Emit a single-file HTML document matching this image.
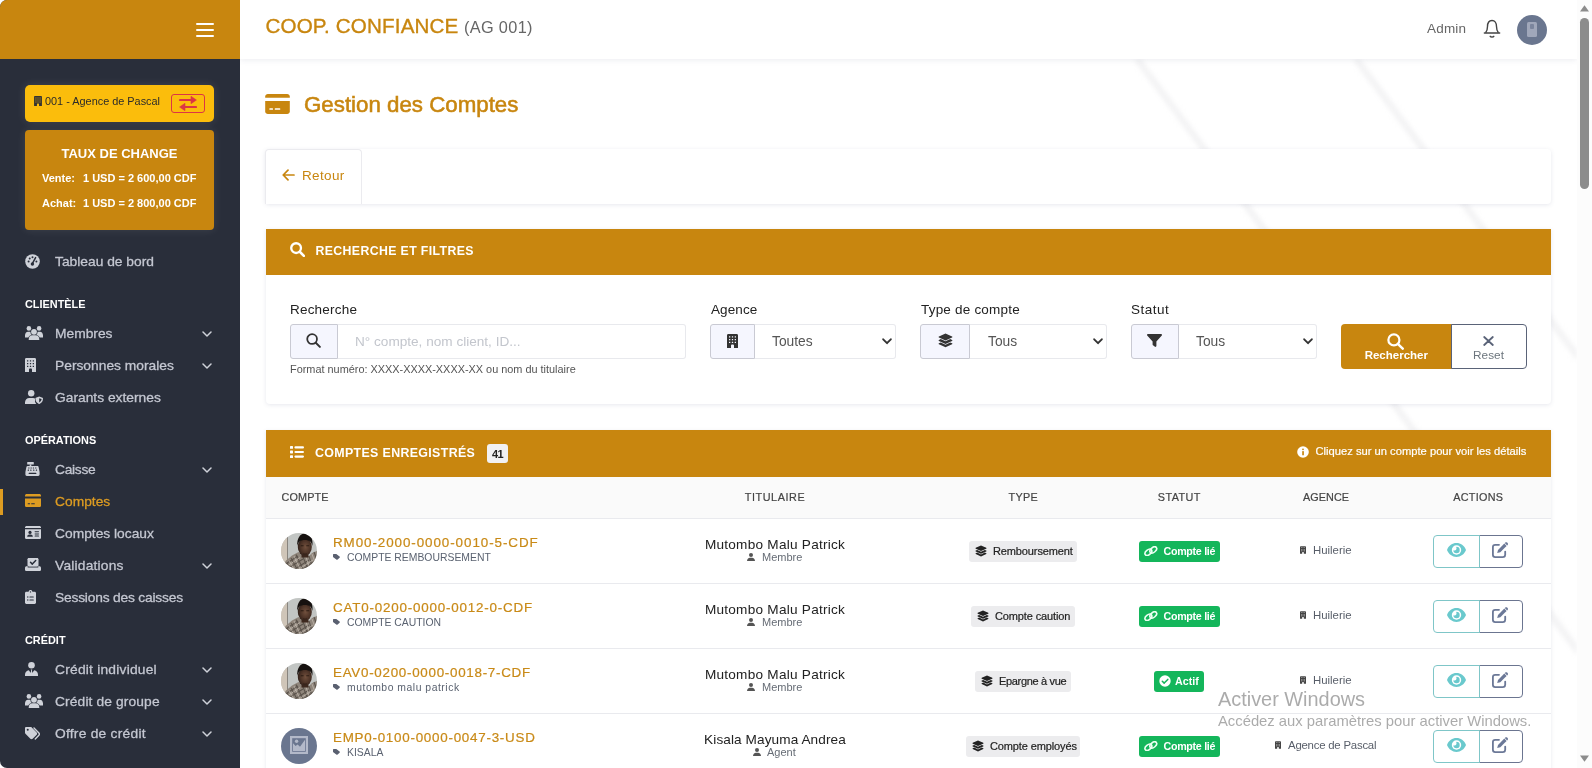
<!DOCTYPE html>
<html lang="fr">
<head>
<meta charset="utf-8">
<title>Gestion des Comptes</title>
<style>
*{box-sizing:border-box;margin:0;padding:0}
html,body{width:1592px;height:768px;overflow:hidden;background:#fff;font-family:"Liberation Sans",sans-serif;color:#333}
.abs,.abs-c{position:absolute;white-space:nowrap}
.abs-c{transform:translateX(-50%)}
svg{display:block}
/* sidebar */
#sidebar{position:absolute;left:0;top:0;width:240px;height:768px;background:#292e3a;overflow:hidden;border-radius:7px 0 0 7px}
#sb-head{position:absolute;left:0;top:0;width:240px;height:59px;background:#c8860f}
.burger{position:absolute;left:196px;top:23px;width:18px;height:14px}
.burger i{position:absolute;left:0;width:18px;height:2px;background:#fff;border-radius:1px}
#agency{position:absolute;left:25px;top:85px;width:189px;height:37px;background:#fbbd0c;border-radius:5px;box-shadow:0 0 10px rgba(255,255,255,.12)}
#taux{position:absolute;left:25px;top:130px;width:189px;height:100px;background:#c8860f;border-radius:4px;box-shadow:0 0 10px rgba(255,255,255,.10);color:#fff}
.mi{position:absolute;margin-top:1.4px;left:55px;font-size:13.8px;-webkit-text-stroke-width:.3px;color:#c4c7d1;line-height:20px;white-space:nowrap;transform:scaleY(.92);transform-origin:0 75%}
.mh{position:absolute;left:25px;font-size:10.9px;font-weight:bold;color:#fff;line-height:16px;letter-spacing:0;white-space:nowrap;margin-top:1px}
.ico{position:absolute}
.chev{position:absolute;left:202px;width:10px;height:6px}
/* topbar */
#topbar{z-index:2;position:absolute;left:240px;top:0;width:1337px;height:59px;background:#fff;box-shadow:0 1px 6px rgba(60,70,110,.10)}
#main{position:absolute;left:240px;top:58px;width:1337px;height:710px;background:#fff;overflow:hidden}
/* scrollbar */
#scroll{position:absolute;left:1577px;top:0;width:15px;height:768px;background:#fcfcfc}
#scroll .thumb{position:absolute;left:3px;top:18px;width:9px;height:171px;background:#8c8c8c;border-radius:4.500px}
.card{position:absolute;background:#fff;box-shadow:0 1px 4px rgba(70,80,120,.13);border-radius:4px}
.chead{position:absolute;background:#c8860f}

.lbl{position:absolute;font-size:13.5px;color:#222;line-height:18px;white-space:nowrap}
.ibox{position:absolute;top:324px;height:35px;background:#f5f6fe;border:1px solid #c9cad3;border-radius:3px 0 0 3px}
.inp{position:absolute;top:324px;height:35px;background:#fff;border:1px solid #e8e9ed;border-left:none;border-radius:0 3px 3px 0}
.sel{position:absolute;font-size:13.8px;color:#555;line-height:18px;top:332.600px;white-space:nowrap}
.th{position:absolute;top:490px;font-size:10.8px;color:#444;line-height:14px;white-space:nowrap;-webkit-text-stroke-width:.2px}
.thc{transform:translateX(-50%)}
#tbc{position:absolute;left:0;top:0;z-index:3;will-change:transform}
#content{position:absolute;left:0;top:0;z-index:1;will-change:transform}
#sidebar{z-index:4;will-change:transform}
#scroll{z-index:5}

.row{position:absolute;left:266px;width:1285px;height:65px;border-top:1px solid #e9eaee;background:#fff}
.acc{position:absolute;left:333px;-webkit-text-stroke-width:.2px;font-size:13.4px;letter-spacing:1.05px;color:#c98a17;line-height:18px;white-space:nowrap}
.sub{position:absolute;left:347px;margin-top:1px;font-size:10.4px;color:#5a6270;line-height:14px;white-space:nowrap}
.nm{position:absolute;left:775px;transform:translateX(-50%);font-size:13.6px;letter-spacing:.25px;color:#222;line-height:18px;white-space:nowrap}
.role{position:absolute;font-size:11px;color:#666c75;line-height:14px;white-space:nowrap}
.tb{position:absolute;margin-top:1px;height:21px;background:#ececee;border-radius:3px}
.tbt{position:absolute;font-size:11px;letter-spacing:-.12px;color:#222;line-height:14px;white-space:nowrap;-webkit-text-stroke-width:.2px}
.sb{position:absolute;height:21px;background:#14b65b;border-radius:3px}
.sbt{position:absolute;font-size:10.7px;font-weight:bold;color:#fff;line-height:14px;white-space:nowrap;letter-spacing:-.3px}
.agt{position:absolute;font-size:11.4px;color:#585e69;line-height:14px;white-space:nowrap}
.bv{z-index:1;position:absolute;left:1433px;width:47px;height:33px;border:1px solid #7fc6c8;border-radius:4px 0 0 4px;background:transparent}
.be{position:absolute;left:1479px;width:44px;height:33px;border:1px solid #6b7590;border-radius:0 4px 4px 0;background:#fff}
.av{position:absolute;left:281px;width:36px;height:36px;border-radius:50%;overflow:hidden}
</style>
</head>
<body>
<div id="sidebar">
  <div id="sb-head"><div class="burger"><i style="top:0"></i><i style="top:6px"></i><i style="top:12px"></i></div></div>
  <div id="agency"><svg class="ico" style="left:9px;top:11px" width="8" height="10" viewBox="0 0 11 14"><path d="M1.300 0h8.400c.7 0 1.300.6 1.300 1.300v12.700H7v-2.500c0-.5-.4-.9-.9-.9H4.900c-.5 0-.9.4-.9.900V14H0V1.300C0 .6.600 0 1.300 0z" fill="#333"/><g fill="#fbbd0c"><rect x="2" y="2.2" width="1.300" height="1.300" rx=".2"/><rect x="4.85" y="2.2" width="1.300" height="1.300" rx=".2"/><rect x="7.7" y="2.2" width="1.300" height="1.300" rx=".2"/><rect x="2" y="5" width="1.300" height="1.300" rx=".2"/><rect x="4.85" y="5" width="1.300" height="1.300" rx=".2"/><rect x="7.7" y="5" width="1.300" height="1.300" rx=".2"/><rect x="2" y="7.8" width="1.300" height="1.300" rx=".2"/><rect x="4.85" y="7.8" width="1.300" height="1.300" rx=".2"/><rect x="7.7" y="7.8" width="1.300" height="1.300" rx=".2"/></g></svg><span class="abs" id="t-ag" style="left:20px;top:8px;font-size:10.9px;line-height:16px;color:#2b2b2b">001 - Agence de Pascal</span><div style="position:absolute;left:146px;top:9px;width:34px;height:19px;border:1px solid #dc3545;border-radius:3px"><svg style="position:absolute;left:7px;top:1px" width="18" height="15" viewBox="0 0 18 15"><path d="M1 4h12M17 11H5" fill="none" stroke="#dc3545" stroke-width="2.200" stroke-linecap="round"/><path d="M12 .3l5.400 3.700L12 7.700zM6 7.300L.6 11 6 14.700z" fill="#dc3545" stroke="#dc3545" stroke-width=".6" stroke-linejoin="round"/></svg></div></div>
  <div id="taux"><span class="abs-c" id="t-taux" style="left:94.5px;top:16px;font-size:13px;font-weight:bold;line-height:16px">TAUX DE CHANGE</span><span class="abs" id="t-v1" style="left:17px;top:41px;font-size:11px;font-weight:bold;line-height:14px">Vente:</span><span class="abs" id="t-v2" style="left:58px;top:41px;font-size:11px;font-weight:bold;line-height:14px">1 USD = 2 600,00 CDF</span><span class="abs" id="t-a1" style="left:17px;top:66px;font-size:11px;font-weight:bold;line-height:14px">Achat:</span><span class="abs" id="t-a2" style="left:58px;top:66px;font-size:11px;font-weight:bold;line-height:14px">1 USD = 2 800,00 CDF</span></div>
  <span class="mi" id="mi0" style="top:251px">Tableau de bord</span>
  <span class="mi" id="mi1" style="top:323px">Membres</span>
  <svg class="chev" style="top:331px" viewBox="0 0 10 6"><path d="M1 1l4 4 4-4" fill="none" stroke="#cfd2d9" stroke-width="1.5" stroke-linecap="round" stroke-linejoin="round"/></svg>
  <span class="mi" id="mi2" style="top:355px">Personnes morales</span>
  <svg class="chev" style="top:363px" viewBox="0 0 10 6"><path d="M1 1l4 4 4-4" fill="none" stroke="#cfd2d9" stroke-width="1.5" stroke-linecap="round" stroke-linejoin="round"/></svg>
  <span class="mi" id="mi3" style="top:387px">Garants externes</span>
  <span class="mi" id="mi4" style="top:459px;letter-spacing:-0.3px">Caisse</span>
  <svg class="chev" style="top:467px" viewBox="0 0 10 6"><path d="M1 1l4 4 4-4" fill="none" stroke="#cfd2d9" stroke-width="1.5" stroke-linecap="round" stroke-linejoin="round"/></svg>
  <span class="mi" id="mi5" style="top:491px;color:#dd9c22">Comptes</span>
  <span class="mi" id="mi6" style="top:523px">Comptes locaux</span>
  <span class="mi" id="mi7" style="top:555px;letter-spacing:0.2px">Validations</span>
  <svg class="chev" style="top:563px" viewBox="0 0 10 6"><path d="M1 1l4 4 4-4" fill="none" stroke="#cfd2d9" stroke-width="1.5" stroke-linecap="round" stroke-linejoin="round"/></svg>
  <span class="mi" id="mi8" style="top:587px;letter-spacing:-0.2px">Sessions des caisses</span>
  <span class="mi" id="mi9" style="top:659px;letter-spacing:0.22px">Crédit individuel</span>
  <svg class="chev" style="top:667px" viewBox="0 0 10 6"><path d="M1 1l4 4 4-4" fill="none" stroke="#cfd2d9" stroke-width="1.5" stroke-linecap="round" stroke-linejoin="round"/></svg>
  <span class="mi" id="mi10" style="top:691px;letter-spacing:0.12px">Crédit de groupe</span>
  <svg class="chev" style="top:699px" viewBox="0 0 10 6"><path d="M1 1l4 4 4-4" fill="none" stroke="#cfd2d9" stroke-width="1.5" stroke-linecap="round" stroke-linejoin="round"/></svg>
  <span class="mi" id="mi11" style="top:723px;letter-spacing:0.24px">Offre de crédit</span>
  <svg class="chev" style="top:731px" viewBox="0 0 10 6"><path d="M1 1l4 4 4-4" fill="none" stroke="#cfd2d9" stroke-width="1.5" stroke-linecap="round" stroke-linejoin="round"/></svg>
  <span class="mh" id="mh0" style="top:295px">CLIENTÈLE</span>
  <span class="mh" id="mh1" style="top:431px">OPÉRATIONS</span>
  <span class="mh" id="mh2" style="top:631px">CRÉDIT</span>
  <div style="position:absolute;left:0;top:489px;width:3px;height:26px;background:#dd9c22"></div>
  <svg class="ico" style="left:25px;top:254px" width="15" height="15" viewBox="0 0 15 15"><circle cx="7.5" cy="7.5" r="7.3" fill="#cfd2d9"/><circle cx="3.6" cy="7.6" r="1" fill="#292e3a"/><circle cx="4.7" cy="4.5" r="1" fill="#292e3a"/><circle cx="7.5" cy="3.3" r="1" fill="#292e3a"/><circle cx="11.4" cy="7.6" r="1" fill="#292e3a"/><path d="M10.6 3.6L7.6 9.2" stroke="#292e3a" stroke-width="1.5" stroke-linecap="round"/><circle cx="7.4" cy="10" r="1.7" fill="#292e3a"/></svg>
  <svg class="ico" style="left:25px;top:326px" width="18" height="14" viewBox="0 0 18 14"><circle cx="9" cy="5.800" r="2.900" fill="#cfd2d9"/><path d="M3.700 14v-.8c0-2.300 1.700-3.900 3.800-3.900h3c2.100 0 3.800 1.600 3.800 3.900v.8z" fill="#cfd2d9"/><circle cx="3.900" cy="2.400" r="2.300" fill="#cfd2d9"/><circle cx="14.100" cy="2.400" r="2.300" fill="#cfd2d9"/><path d="M0 9.400C0 7.300 1.300 5.800 3 5.800h1.700c.3 0 .6 0 .8.100-.1 1.400.5 2.500 1.300 3.200-1.600.3-2.800 1.100-3.400 2.300H0z" fill="#cfd2d9"/><path d="M18 9.400c0-2.100-1.300-3.600-3-3.600h-1.700c-.3 0-.6 0-.8.100.1 1.400-.5 2.500-1.300 3.200 1.600.3 2.800 1.100 3.400 2.300H18z" fill="#cfd2d9"/></svg>
  <svg class="ico" style="left:25px;top:358px" width="11" height="14" viewBox="0 0 11 14"><path d="M1.300 0h8.400c.7 0 1.300.6 1.300 1.300v12.700H7v-2.500c0-.5-.4-.9-.9-.9H4.900c-.5 0-.9.4-.9.900V14H0V1.300C0 .6.600 0 1.300 0z" fill="#cfd2d9"/><g fill="#292e3a"><rect x="2" y="2.2" width="1.300" height="1.300" rx=".2"/><rect x="4.85" y="2.2" width="1.300" height="1.300" rx=".2"/><rect x="7.7" y="2.2" width="1.300" height="1.300" rx=".2"/><rect x="2" y="5" width="1.300" height="1.300" rx=".2"/><rect x="4.85" y="5" width="1.300" height="1.300" rx=".2"/><rect x="7.7" y="5" width="1.300" height="1.300" rx=".2"/><rect x="2" y="7.8" width="1.300" height="1.300" rx=".2"/><rect x="4.85" y="7.8" width="1.300" height="1.300" rx=".2"/><rect x="7.7" y="7.8" width="1.300" height="1.300" rx=".2"/></g></svg>
  <svg class="ico" style="left:25px;top:390px" width="18" height="14" viewBox="0 0 18 14"><circle cx="6.200" cy="3.300" r="3.200" fill="#cfd2d9"/><path d="M0 14v-1.500c0-2.600 1.900-4.600 4.300-4.600h3.800c.7 0 1.300.2 1.900.5v2.400c0 1.300.5 2.400 1.300 3.200z" fill="#cfd2d9"/><path d="M14.200 6.600l3.300 1.200c.3.100.5.400.5.700 0 2.800-1.500 4.600-3.500 5.400-.2.100-.4.100-.6 0-2-.8-3.500-2.600-3.500-5.400 0-.3.200-.6.500-.7z" fill="#cfd2d9"/><path d="M14.200 8.200v4.300c1.400-.7 2.300-1.900 2.400-3.400z" fill="#292e3a"/></svg>
  <svg class="ico" style="left:25px;top:462px" width="15" height="14" viewBox="0 0 15 14"><rect x="2.200" y="0" width="6.600" height="2.600" rx=".6" fill="#cfd2d9"/><rect x="4.700" y="2.400" width="1.600" height="1.800" fill="#cfd2d9"/><path d="M2.600 4h9.800c.6 0 1.100.4 1.200 1l.9 4.400c.1.300.1.500.1.800V12.600c0 .8-.6 1.400-1.400 1.400H1.800C1 14 .4 13.400.4 12.600V10.200c0-.3 0-.5.100-.8L1.400 5c.1-.6.600-1 1.200-1z" fill="#cfd2d9"/><g fill="#292e3a"><rect x="3.200" y="5.500" width="1.300" height="1.100" rx=".3"/><rect x="5.500" y="5.500" width="1.300" height="1.100" rx=".3"/><rect x="7.800" y="5.500" width="1.300" height="1.100" rx=".3"/><rect x="10.100" y="5.500" width="1.300" height="1.100" rx=".3"/><rect x="2.700" y="7.600" width="1.300" height="1.100" rx=".3"/><rect x="5.200" y="7.600" width="1.300" height="1.100" rx=".3"/><rect x="8.100" y="7.600" width="1.300" height="1.100" rx=".3"/><rect x="10.800" y="7.600" width="1.300" height="1.100" rx=".3"/><rect x="3.600" y="10.800" width="7.800" height="1.100" rx=".5"/></g></svg>
  <svg class="ico" style="left:25px;top:494px" width="16" height="13" viewBox="0 0 16 13"><path d="M1.700 0h12.600c.9 0 1.700.7 1.700 1.600V2.400H0V1.600C0 .7.800 0 1.700 0z" fill="#dd9c22"/><path d="M0 4.600h16v6.800c0 .9-.8 1.600-1.700 1.600H1.700C.8 13 0 12.300 0 11.400z" fill="#dd9c22"/><rect x="2.700" y="9.200" width="2.400" height="1.100" rx=".4" fill="#292e3a"/><rect x="6.200" y="9.200" width="3.600" height="1.100" rx=".4" fill="#292e3a"/></svg>
  <svg class="ico" style="left:25px;top:526px" width="16" height="13" viewBox="0 0 16 13"><path d="M1.700 0h12.600c.9 0 1.700.7 1.700 1.600V2H0v-.4C0 .7.800 0 1.700 0z" fill="#cfd2d9"/><path d="M0 3.200h16v8.200c0 .9-.8 1.600-1.700 1.600H1.700C.8 13 0 12.300 0 11.400z" fill="#cfd2d9"/><circle cx="5" cy="6.400" r="1.600" fill="#292e3a"/><path d="M2.200 10.800c0-1.300 1-2.200 2.200-2.200h1.200c1.200 0 2.200.9 2.200 2.200z" fill="#292e3a"/><rect x="9.600" y="5.200" width="4.400" height="1" rx=".4" fill="#292e3a"/><rect x="9.600" y="7.400" width="4.400" height="1" rx=".4" fill="#292e3a"/><rect x="9.600" y="9.600" width="4.400" height="1" rx=".4" fill="#292e3a"/></svg>
  <svg class="ico" style="left:25px;top:558px" width="16" height="13" viewBox="0 0 16 13"><rect x="2.700" y="0" width="10.600" height="9.500" rx="1.300" fill="#cfd2d9"/><path d="M5.500 4.300l1.800 1.800 3.400-3.500" fill="none" stroke="#292e3a" stroke-width="1.500" stroke-linecap="round" stroke-linejoin="round"/><path d="M1.600 8.300h12.800c.9 0 1.600.7 1.600 1.600v1.500c0 .9-.7 1.600-1.600 1.600H1.600C.7 13 0 12.300 0 11.400V9.900c0-.9.700-1.600 1.600-1.600z" fill="#cfd2d9"/><path d="M2.700 8.300h10.600v1.200H2.700z" fill="#292e3a"/><rect x="2.700" y="0" width="10.600" height="8.400" rx="1.300" fill="#cfd2d9"/><path d="M5.500 4.300l1.800 1.800 3.400-3.500" fill="none" stroke="#292e3a" stroke-width="1.500" stroke-linecap="round" stroke-linejoin="round"/></svg>
  <svg class="ico" style="left:25px;top:590px" width="11" height="14" viewBox="0 0 11 14"><path d="M1.400 1.700H3.600C3.800.7 4.600 0 5.500 0s1.700.7 1.900 1.700h2.200c.8 0 1.400.6 1.400 1.400v9.500c0 .8-.6 1.400-1.400 1.400H1.400C.6 14 0 13.400 0 12.600V3.100c0-.8.600-1.400 1.400-1.400z" fill="#cfd2d9"/><circle cx="5.500" cy="1.900" r=".7" fill="#292e3a"/><g fill="#292e3a"><circle cx="2.800" cy="7" r=".7"/><circle cx="2.800" cy="10" r=".7"/><rect x="4.400" y="6.500" width="4.400" height="1" rx=".5"/><rect x="4.400" y="9.500" width="4.400" height="1" rx=".5"/></g></svg>
  <svg class="ico" style="left:25px;top:662px" width="13" height="14" viewBox="0 0 13 14"><circle cx="6.500" cy="3.300" r="3.300" fill="#cfd2d9"/><path d="M0 14v-1.300c0-2.300 1.600-4.200 3.800-4.500L5.800 11l.7-2 .7 2 2-2.800c2.200.3 3.800 2.200 3.800 4.500V14z" fill="#cfd2d9"/><path d="M5.700 7.500h1.600l-.4.900.6 3.400-1 1.400-1-1.400.6-3.400z" fill="#cfd2d9"/></svg>
  <svg class="ico" style="left:25px;top:694px" width="18" height="14" viewBox="0 0 18 14"><circle cx="9" cy="5.800" r="2.900" fill="#cfd2d9"/><path d="M3.700 14v-.8c0-2.300 1.700-3.900 3.800-3.900h3c2.100 0 3.800 1.600 3.800 3.900v.8z" fill="#cfd2d9"/><circle cx="3.900" cy="2.400" r="2.300" fill="#cfd2d9"/><circle cx="14.100" cy="2.400" r="2.300" fill="#cfd2d9"/><path d="M0 9.400C0 7.300 1.300 5.800 3 5.800h1.700c.3 0 .6 0 .8.100-.1 1.400.5 2.500 1.300 3.200-1.600.3-2.800 1.100-3.400 2.300H0z" fill="#cfd2d9"/><path d="M18 9.400c0-2.100-1.300-3.600-3-3.600h-1.700c-.3 0-.6 0-.8.100.1 1.400-.5 2.500-1.300 3.200 1.600.3 2.800 1.100 3.400 2.300H18z" fill="#cfd2d9"/></svg>
  <svg class="ico" style="left:25px;top:726.500px" width="15.500" height="13" viewBox="0 0 17 14"><path d="M0 1.300C0 .6.600 0 1.300 0h4.900c.5 0 .9.200 1.200.5l5.400 5.400c.7.700.7 1.800 0 2.500l-4.400 4.400c-.7.700-1.800.7-2.500 0L.5 7.400C.2 7.100 0 6.700 0 6.200z" fill="#cfd2d9"/><circle cx="3" cy="3" r="1.100" fill="#292e3a"/><path d="M9.300.3c.3-.3.800-.3 1.100 0l5.400 5.500c1 1 1 2.600 0 3.600l-4 4.100c-.3.300-.8.300-1.100 0s-.3-.8 0-1.100l4-4.100c.4-.4.400-1 0-1.400L9.300 1.400c-.3-.3-.3-.8 0-1.100z" fill="#cfd2d9"/></svg>
</div>
<div id="topbar"></div>
<div id="tbc">
<span class="abs" id="t-coop" style="left:265.5px;top:13.400px;font-size:20.6px;line-height:26px;color:#c8860f;-webkit-text-stroke-width:.35px;letter-spacing:.15px">COOP. CONFIANCE</span>
<span class="abs" id="t-ag2" style="left:464px;top:16.300px;font-size:16.3px;line-height:22px;color:#666;letter-spacing:.35px">(AG 001)</span>
<span class="abs" id="t-admin" style="left:1427px;top:20px;font-size:13.5px;line-height:18px;color:#666;letter-spacing:.2px">Admin</span>
<svg class="ico" style="left:1483px;top:19px" width="18" height="20" viewBox="0 0 18 20"><path d="M2.600 13.800C4.100 12 4.500 10.300 4.500 7.600 4.500 4 6.200 1.500 9 1.500s4.500 2.500 4.500 6.100c0 2.700.4 4.400 1.900 6.200" fill="none" stroke="#444" stroke-width="1.400"/><path d="M1.400 14h15.200" stroke="#444" stroke-width="1.500" stroke-linecap="round"/><path d="M7.200 17.300c.5.900 3.100.9 3.600 0" fill="none" stroke="#444" stroke-width="1.400" stroke-linecap="round"/></svg>
<div style="position:absolute;left:1517px;top:15px;width:30px;height:30px;border-radius:50%;background:#6a768f"><div style="position:absolute;left:10px;top:7px;width:10px;height:15px;border-radius:1.500px;background:#a0a7ba"></div><div style="position:absolute;left:12.500px;top:9px;width:4px;height:5px;background:#7b859d;border-radius:1px"></div></div>
</div>
<div id="main"></div>
<div id="content">
<svg class="ico" style="left:240px;top:59px;filter:blur(2px)" width="1337" height="709" viewBox="240 59 1337 709"><g fill="none" stroke="#f4f4f5" stroke-width="7"><path d="M1137 59L1665 768"/><path d="M1356 59L1884 768"/></g></svg>
<svg class="ico" style="left:265px;top:94px" width="25" height="20" viewBox="0 0 16 13"><path d="M1.700 0h12.600c.9 0 1.700.7 1.700 1.600V2.400H0V1.600C0 .7.800 0 1.700 0z" fill="#c8860f"/><path d="M0 4.600h16v6.800c0 .9-.8 1.600-1.700 1.600H1.700C.8 13 0 12.300 0 11.400z" fill="#c8860f"/><rect x="2.700" y="9.200" width="2.400" height="1.100" rx=".4" fill="#fff"/><rect x="6.200" y="9.200" width="3.600" height="1.100" rx=".4" fill="#fff"/></svg>
<span class="abs" id="t-title" style="left:304px;top:90.600px;font-size:22.3px;line-height:28px;color:#c8860f;-webkit-text-stroke-width:.55px">Gestion des Comptes</span>
<div class="card" style="left:265px;top:149px;width:1286px;height:55px"></div>
<div style="position:absolute;left:265px;top:149px;width:97px;height:55px;border:1px solid #ebebef;border-bottom:none;border-radius:4px 4px 0 0;background:#fff"></div>
<svg class="ico" style="left:282px;top:169px" width="13" height="12" viewBox="0 0 13 12"><path d="M12 6H1.500M6 1.200L1.200 6 6 10.800" fill="none" stroke="#c8860f" stroke-width="1.700" stroke-linecap="round" stroke-linejoin="round"/></svg>
<span class="abs" id="t-retour" style="left:302px;top:167px;font-size:13.5px;line-height:18px;color:#c8860f;letter-spacing:.35px">Retour</span>
<div class="card" style="left:266px;top:229px;width:1285px;height:175px;border-radius:0 0 4px 4px"></div>
<div class="chead" style="left:266px;top:229px;width:1285px;height:46px"></div>
<svg class="ico" style="left:289.500px;top:242px" width="15" height="15" viewBox="0 0 16 16"><circle cx="6.500" cy="6.500" r="5.200" fill="none" stroke="#fff" stroke-width="2.5"/><path d="M10.400 10.400l4.400 4.400" stroke="#fff" stroke-width="2.7" stroke-linecap="round"/></svg>
<span class="abs" id="t-rf" style="left:315.500px;top:243px;font-size:12.3px;font-weight:bold;line-height:16px;color:#fff;letter-spacing:.38px">RECHERCHE ET FILTRES</span>
<span class="lbl" id="l-rech" style="left:290px;top:301px;letter-spacing:.2px">Recherche</span>
<div class="ibox" style="left:290px;width:48px"></div><div class="inp" style="left:338px;width:348px"></div>
<svg class="ico" style="left:306px;top:333px" width="15" height="15" viewBox="0 0 16 16"><circle cx="6.500" cy="6.500" r="5.200" fill="none" stroke="#333" stroke-width="1.9"/><path d="M10.400 10.400l4.400 4.400" stroke="#333" stroke-width="2.1" stroke-linecap="round"/></svg>
<span class="abs" id="t-ph" style="left:355px;top:332.600px;font-size:13.6px;line-height:18px;color:#c3c6cd">N° compte, nom client, ID...</span>
<span class="abs" id="t-help" style="left:290px;top:362px;font-size:10.9px;line-height:14px;color:#555">Format numéro: XXXX-XXXX-XXXX-XX ou nom du titulaire</span>
<span class="lbl" id="l-ag" style="left:711px;top:301px;letter-spacing:.1px">Agence</span>
<div class="ibox" style="left:710px;width:45px"></div><div class="inp" style="left:755px;width:141px"></div>
<svg class="ico" style="left:727px;top:334px" width="11" height="14" viewBox="0 0 11 14"><path d="M1.300 0h8.400c.7 0 1.300.6 1.300 1.300v12.700H7v-2.500c0-.5-.4-.9-.9-.9H4.900c-.5 0-.9.4-.9.900V14H0V1.300C0 .6.600 0 1.300 0z" fill="#333"/><g fill="#f5f6fe"><rect x="2" y="2.2" width="1.300" height="1.300" rx=".2"/><rect x="4.85" y="2.2" width="1.300" height="1.300" rx=".2"/><rect x="7.7" y="2.2" width="1.300" height="1.300" rx=".2"/><rect x="2" y="5" width="1.300" height="1.300" rx=".2"/><rect x="4.85" y="5" width="1.300" height="1.300" rx=".2"/><rect x="7.7" y="5" width="1.300" height="1.300" rx=".2"/><rect x="2" y="7.8" width="1.300" height="1.300" rx=".2"/><rect x="4.85" y="7.8" width="1.300" height="1.300" rx=".2"/><rect x="7.7" y="7.8" width="1.300" height="1.300" rx=".2"/></g></svg>
<span class="sel" id="s-toutes" style="left:772px">Toutes</span><svg class="ico" style="left:882px;top:338px" width="10" height="7" viewBox="0 0 10 7"><path d="M1.200 1.300l3.800 3.900 3.800-3.900" fill="none" stroke="#333" stroke-width="1.900" stroke-linecap="round" stroke-linejoin="round"/></svg>
<span class="lbl" id="l-type" style="left:921px;top:301px;letter-spacing:.2px">Type de compte</span>
<div class="ibox" style="left:920px;width:50px"></div><div class="inp" style="left:970px;width:137px"></div>
<svg class="ico" style="left:938px;top:333px" width="15" height="15" viewBox="0 0 16 16"><path d="M8 .6l7 3.200c.5.200.5.900 0 1.100L8 8.100 1 4.900c-.5-.2-.5-.9 0-1.100z" fill="#333"/><path d="M1 7.400l1.900-.9L8 8.900l5.100-2.400 1.900.9c.5.200.5.900 0 1.100l-7 3.200-7-3.200c-.5-.2-.5-.9 0-1.100z" fill="#333"/><path d="M1 11l1.900-.9L8 12.500l5.100-2.400 1.900.9c.5.200.5.900 0 1.100l-7 3.200-7-3.200c-.5-.2-.5-.9 0-1.100z" fill="#333"/></svg>
<span class="sel" id="s-tous1" style="left:988px">Tous</span><svg class="ico" style="left:1093px;top:338px" width="10" height="7" viewBox="0 0 10 7"><path d="M1.200 1.300l3.800 3.900 3.800-3.900" fill="none" stroke="#333" stroke-width="1.900" stroke-linecap="round" stroke-linejoin="round"/></svg>
<span class="lbl" id="l-stat" style="left:1131px;top:301px;letter-spacing:.5px">Statut</span>
<div class="ibox" style="left:1131px;width:48px"></div><div class="inp" style="left:1179px;width:138px"></div>
<svg class="ico" style="left:1147px;top:334px" width="15" height="13" viewBox="0 0 15 13"><path d="M.9 0h13.200c.8 0 1.200.9.700 1.500L9.400 7.600v4.500c0 .7-.8 1.100-1.400.7l-2-1.500c-.2-.2-.4-.4-.4-.7V7.600L.2 1.500C-.3.900.1 0 .9 0z" fill="#333"/></svg>
<span class="sel" id="s-tous2" style="left:1196px">Tous</span><svg class="ico" style="left:1303px;top:338px" width="10" height="7" viewBox="0 0 10 7"><path d="M1.200 1.300l3.800 3.900 3.800-3.900" fill="none" stroke="#333" stroke-width="1.900" stroke-linecap="round" stroke-linejoin="round"/></svg>
<div style="position:absolute;left:1341px;top:324px;width:111px;height:45px;background:#c8860f;border-radius:4px 0 0 4px"></div>
<svg class="ico" style="left:1387px;top:333px" width="17" height="17" viewBox="0 0 16 16"><circle cx="6.500" cy="6.500" r="5.200" fill="none" stroke="#fff" stroke-width="2.1"/><path d="M10.400 10.400l4.400 4.400" stroke="#fff" stroke-width="2.3000000000000003" stroke-linecap="round"/></svg>
<span class="abs-c" id="t-rechbtn" style="left:1396.300px;top:348px;font-size:11.5px;font-weight:bold;line-height:14px;color:#fff">Rechercher</span>
<div style="position:absolute;left:1451px;top:324px;width:76px;height:45px;background:#fff;border:1px solid #5a6378;border-radius:0 4px 4px 0"></div>
<svg class="ico" style="left:1483px;top:336px" width="11" height="10" viewBox="0 0 11 10"><path d="M1.200 1l8.600 8M9.800 1L1.200 9" stroke="#5a6378" stroke-width="1.800" stroke-linecap="round"/></svg>
<span class="abs-c" id="t-reset" style="left:1488.500px;top:348px;font-size:11.8px;line-height:14px;color:#6c757d">Reset</span>
<div class="card" style="left:266px;top:430px;width:1285px;height:360px;border-radius:0"></div>
<div class="chead" style="left:266px;top:430px;width:1285px;height:47px"></div>
<svg class="ico" style="left:290px;top:446px" width="14" height="12" viewBox="0 0 14 12"><g fill="#fff"><rect x="0" y="0" width="3" height="2.800" rx=".6"/><rect x="0" y="4.600" width="3" height="2.800" rx=".6"/><rect x="0" y="9.200" width="3" height="2.800" rx=".6"/><rect x="4.400" y=".3" width="9.600" height="2.200" rx="1.100"/><rect x="4.400" y="4.900" width="9.600" height="2.200" rx="1.100"/><rect x="4.400" y="9.500" width="9.600" height="2.200" rx="1.100"/></g></svg>
<span class="abs" id="t-ce" style="left:315px;top:445px;font-size:12.4px;font-weight:bold;line-height:16px;color:#fff;letter-spacing:.35px">COMPTES ENREGISTRÉS</span>
<div style="position:absolute;left:487px;top:444px;width:21px;height:19px;background:#f1f1f3;border-radius:3px"></div><span class="abs" id="t-41" style="left:492px;top:447px;font-size:11px;font-weight:bold;line-height:14px;color:#222;letter-spacing:-.5px">41</span>
<svg class="ico" style="left:1297px;top:445.500px" width="12" height="12" viewBox="0 0 12 12"><circle cx="6" cy="6" r="5.800" fill="#fff"/><circle cx="6" cy="3.300" r=".9" fill="#c8860f"/><rect x="5.200" y="5" width="1.700" height="4.300" rx=".4" fill="#c8860f"/></svg>
<span class="abs" id="t-clic" style="left:1315.500px;top:444px;font-size:11.2px;line-height:14px;color:#fff;-webkit-text-stroke-width:.2px">Cliquez sur un compte pour voir les détails</span>
<div style="position:absolute;left:266px;top:477px;width:1285px;height:41px;background:#fafafa"></div>
<span class="th" id="th0" style="left:281.500px;letter-spacing:0.15px">COMPTE</span>
<span class="th thc" id="th1" style="left:775px;letter-spacing:0.6px">TITULAIRE</span>
<span class="th thc" id="th2" style="left:1023.2px;letter-spacing:0.3px">TYPE</span>
<span class="th thc" id="th3" style="left:1179.3px;letter-spacing:0.45px">STATUT</span>
<span class="th thc" id="th4" style="left:1326px;letter-spacing:0.1px">AGENCE</span>
<span class="th thc" id="th5" style="left:1478.2px;letter-spacing:0.3px">ACTIONS</span>
<div class="row" style="top:518px"></div>
<div class="av" style="top:533px"><svg width="36" height="36" viewBox="0 0 36 36"><defs><radialGradient id="fg" cx=".55" cy=".5" r=".6"><stop offset="0" stop-color="#71503d"/><stop offset=".6" stop-color="#4b3226"/><stop offset="1" stop-color="#2a1c16"/></radialGradient></defs><rect width="36" height="36" fill="#c2c5c3"/><rect x="0" y="0" width="6.300" height="36" fill="#cfc5b8"/><rect x="6.200" y="0" width=".8" height="36" fill="#7a756e"/><path d="M2 36L4.500 28 11 22.500 17.500 19 22 23h6l3-3 5-2v18z" fill="#8f857b"/><g stroke="#4b443d" stroke-width="1.100" opacity=".75"><path d="M6 30l4 6M10 25l6 11M15 21.500l7 14.500M22 24l5 12M28 23l4 13M33 19l3 8"/><path d="M3 32l14-9M6 36l16-10M14 36l14-9M22 36l14-9M30 36l6-4"/></g><g stroke="#d6cec4" stroke-width=".8" opacity=".7"><path d="M8 27.500l5 8.500M13 23l6 13M25 24l4 12M31 21l4 11"/><path d="M4 34.500l15-10M18 36l14-9M26 36l10-6.500"/></g><rect x="20.500" y="19" width="7" height="5.500" fill="#3d281e"/><ellipse cx="23.800" cy="14" rx="7" ry="9" fill="url(#fg)"/><path d="M16.300 13c-.6-7 2.500-12.500 7.500-12.500 5.500 0 8.500 5 7.600 12.500-.8-4-2.600-6-7.600-6-4.600 0-6.600 2-7.500 6z" fill="#16110f"/><path d="M19.800 12.700h2.800M25.300 12.700h2.800" stroke="#22160f" stroke-width="1.100" opacity=".8"/><path d="M22 20.800q2 .8 4 0" stroke="#2a1a14" stroke-width=".9" fill="none" opacity=".8"/></svg></div>
<span class="acc" id="acc0" style="top:534px;letter-spacing:0.93px">RM00-2000-0000-0010-5-CDF</span>
<svg class="ico" style="left:333px;top:554px" width="7" height="6" viewBox="0 0 7 6"><path d="M0 .6C0 .3.300 0 .6 0h2.500c.2 0 .4.100.5.200l3 2.400c.4.300.4.800 0 1.100L4.600 5.600c-.4.300-.9.300-1.300 0L.3 3.200C.1 3.100 0 2.900 0 2.700z" fill="#5a6070"/></svg><span class="sub" id="sub0" style="top:550px">COMPTE REMBOURSEMENT</span>
<span class="nm" id="nm0" style="top:536px">Mutombo Malu Patrick</span>
<svg class="ico" style="left:747px;top:553px" width="8" height="8" viewBox="0 0 8 8"><circle cx="4" cy="2" r="2" fill="#555"/><path d="M0 8c0-2 1.300-3.300 3-3.300h2c1.700 0 3 1.300 3 3.300z" fill="#555"/></svg><span class="role" id="role0" style="left:762px;top:550px">Membre</span>
<div class="tb" style="left:969px;top:540px;width:108px"></div><svg class="ico" style="left:975px;top:545px" width="12" height="12" viewBox="0 0 16 16"><path d="M8 .6l7 3.200c.5.200.5.900 0 1.100L8 8.100 1 4.900c-.5-.2-.5-.9 0-1.100z" fill="#222"/><path d="M1 7.400l1.900-.9L8 8.900l5.100-2.400 1.900.9c.5.200.5.900 0 1.100l-7 3.200-7-3.200c-.5-.2-.5-.9 0-1.100z" fill="#222"/><path d="M1 11l1.900-.9L8 12.500l5.100-2.400 1.900.9c.5.200.5.900 0 1.100l-7 3.200-7-3.200c-.5-.2-.5-.9 0-1.100z" fill="#222"/></svg><span class="tbt" id="tb0" style="left:993px;top:544px">Remboursement</span>
<div class="sb" style="left:1139px;top:541px;width:81px"></div>
<svg class="ico" style="left:1144px;top:546px" width="14" height="10" viewBox="0 0 14 10"><g fill="none" stroke="#ecfff3" stroke-width="1.600"><ellipse cx="0" cy="0" rx="3.900" ry="2.400" transform="translate(4.400 6.300) rotate(-40)"/><ellipse cx="0" cy="0" rx="3.900" ry="2.400" transform="translate(9.300 3.900) rotate(-40)"/></g></svg><span class="sbt" id="sb0" style="left:1163.5px;top:544px">Compte lié</span>
<svg class="ico" style="left:1300px;top:546px" width="6" height="8" viewBox="0 0 11 14"><path d="M1.300 0h8.400c.7 0 1.300.6 1.300 1.300v12.700H7v-2.500c0-.5-.4-.9-.9-.9H4.900c-.5 0-.9.4-.9.900V14H0V1.300C0 .6.600 0 1.300 0z" fill="#444"/><g fill="#fff"><rect x="2" y="2.2" width="1.300" height="1.300" rx=".2"/><rect x="4.85" y="2.2" width="1.300" height="1.300" rx=".2"/><rect x="7.7" y="2.2" width="1.300" height="1.300" rx=".2"/><rect x="2" y="5" width="1.300" height="1.300" rx=".2"/><rect x="4.85" y="5" width="1.300" height="1.300" rx=".2"/><rect x="7.7" y="5" width="1.300" height="1.300" rx=".2"/><rect x="2" y="7.8" width="1.300" height="1.300" rx=".2"/><rect x="4.85" y="7.8" width="1.300" height="1.300" rx=".2"/><rect x="7.7" y="7.8" width="1.300" height="1.300" rx=".2"/></g></svg><span class="agt" id="ag0" style="left:1313px;top:543px">Huilerie</span>
<div class="bv" style="top:535px"></div><div class="be" style="top:535px"></div><svg class="ico" style="left:1447px;top:543px" width="19" height="14" viewBox="0 0 19 14"><path d="M9.500 0C5.300 0 1.800 2.700.2 6.400c-.2.400-.2.800 0 1.200C1.800 11.300 5.300 14 9.500 14s7.700-2.700 9.300-6.400c.2-.4.200-.8 0-1.200C17.200 2.700 13.700 0 9.500 0z" fill="#6ac9cd"/><circle cx="9.500" cy="7" r="4.700" fill="#fff"/><path d="M9.500 3.800a3.200 3.200 0 1 1-3.200 3.400c.4.200.700.300 1.100.300a2.100 2.100 0 0 0 1.800-3.200c.1-.3.200-.4.300-.5z" fill="#6ac9cd"/></svg><svg class="ico" style="left:1492px;top:542px" width="17" height="16" viewBox="0 0 17 16"><path d="M7 2.800H3.200C1.900 2.800.9 3.800.9 5.100v7.700c0 1.300 1 2.300 2.300 2.300h7.700c1.300 0 2.300-1 2.300-2.300V9.600" fill="none" stroke="#6b7897" stroke-width="1.800" stroke-linecap="round"/><path d="M12.300 1.600l2.300 2.300-6.300 6.300-3.100.8.800-3.100z" fill="#6b7897"/><path d="M13.300.6c.5-.5 1.300-.5 1.800 0l.5.500c.5.500.5 1.300 0 1.800l-.5.500-2.300-2.300z" fill="#6b7897"/></svg>
<div class="row" style="top:583px"></div>
<div class="av" style="top:598px"><svg width="36" height="36" viewBox="0 0 36 36"><defs><radialGradient id="fg1" cx=".55" cy=".5" r=".6"><stop offset="0" stop-color="#71503d"/><stop offset=".6" stop-color="#4b3226"/><stop offset="1" stop-color="#2a1c16"/></radialGradient></defs><rect width="36" height="36" fill="#c2c5c3"/><rect x="0" y="0" width="6.300" height="36" fill="#cfc5b8"/><rect x="6.200" y="0" width=".8" height="36" fill="#7a756e"/><path d="M2 36L4.500 28 11 22.500 17.500 19 22 23h6l3-3 5-2v18z" fill="#8f857b"/><g stroke="#4b443d" stroke-width="1.100" opacity=".75"><path d="M6 30l4 6M10 25l6 11M15 21.500l7 14.500M22 24l5 12M28 23l4 13M33 19l3 8"/><path d="M3 32l14-9M6 36l16-10M14 36l14-9M22 36l14-9M30 36l6-4"/></g><g stroke="#d6cec4" stroke-width=".8" opacity=".7"><path d="M8 27.500l5 8.500M13 23l6 13M25 24l4 12M31 21l4 11"/><path d="M4 34.500l15-10M18 36l14-9M26 36l10-6.500"/></g><rect x="20.500" y="19" width="7" height="5.500" fill="#3d281e"/><ellipse cx="23.800" cy="14" rx="7" ry="9" fill="url(#fg1)"/><path d="M16.300 13c-.6-7 2.500-12.500 7.500-12.500 5.500 0 8.500 5 7.600 12.500-.8-4-2.600-6-7.600-6-4.600 0-6.600 2-7.500 6z" fill="#16110f"/><path d="M19.800 12.700h2.800M25.300 12.700h2.800" stroke="#22160f" stroke-width="1.100" opacity=".8"/><path d="M22 20.800q2 .8 4 0" stroke="#2a1a14" stroke-width=".9" fill="none" opacity=".8"/></svg></div>
<span class="acc" id="acc1" style="top:599px;letter-spacing:0.8px">CAT0-0200-0000-0012-0-CDF</span>
<svg class="ico" style="left:333px;top:619px" width="7" height="6" viewBox="0 0 7 6"><path d="M0 .6C0 .3.300 0 .6 0h2.500c.2 0 .4.100.5.200l3 2.400c.4.300.4.800 0 1.100L4.600 5.600c-.4.300-.9.300-1.300 0L.3 3.200C.1 3.100 0 2.900 0 2.700z" fill="#5a6070"/></svg><span class="sub" id="sub1" style="top:615px">COMPTE CAUTION</span>
<span class="nm" id="nm1" style="top:601px">Mutombo Malu Patrick</span>
<svg class="ico" style="left:747px;top:618px" width="8" height="8" viewBox="0 0 8 8"><circle cx="4" cy="2" r="2" fill="#555"/><path d="M0 8c0-2 1.300-3.300 3-3.300h2c1.700 0 3 1.300 3 3.300z" fill="#555"/></svg><span class="role" id="role1" style="left:762px;top:615px">Membre</span>
<div class="tb" style="left:971px;top:605px;width:104px"></div><svg class="ico" style="left:977px;top:610px" width="12" height="12" viewBox="0 0 16 16"><path d="M8 .6l7 3.200c.5.200.5.900 0 1.100L8 8.100 1 4.900c-.5-.2-.5-.9 0-1.100z" fill="#222"/><path d="M1 7.400l1.900-.9L8 8.900l5.100-2.400 1.900.9c.5.200.5.900 0 1.100l-7 3.200-7-3.200c-.5-.2-.5-.9 0-1.100z" fill="#222"/><path d="M1 11l1.900-.9L8 12.500l5.100-2.400 1.900.9c.5.200.5.900 0 1.100l-7 3.200-7-3.200c-.5-.2-.5-.9 0-1.100z" fill="#222"/></svg><span class="tbt" id="tb1" style="left:995px;top:609px">Compte caution</span>
<div class="sb" style="left:1139px;top:606px;width:81px"></div>
<svg class="ico" style="left:1144px;top:611px" width="14" height="10" viewBox="0 0 14 10"><g fill="none" stroke="#ecfff3" stroke-width="1.600"><ellipse cx="0" cy="0" rx="3.900" ry="2.400" transform="translate(4.400 6.300) rotate(-40)"/><ellipse cx="0" cy="0" rx="3.900" ry="2.400" transform="translate(9.300 3.900) rotate(-40)"/></g></svg><span class="sbt" id="sb1" style="left:1163.5px;top:609px">Compte lié</span>
<svg class="ico" style="left:1300px;top:611px" width="6" height="8" viewBox="0 0 11 14"><path d="M1.300 0h8.400c.7 0 1.300.6 1.300 1.300v12.700H7v-2.500c0-.5-.4-.9-.9-.9H4.900c-.5 0-.9.4-.9.900V14H0V1.300C0 .6.600 0 1.300 0z" fill="#444"/><g fill="#fff"><rect x="2" y="2.2" width="1.300" height="1.300" rx=".2"/><rect x="4.85" y="2.2" width="1.300" height="1.300" rx=".2"/><rect x="7.7" y="2.2" width="1.300" height="1.300" rx=".2"/><rect x="2" y="5" width="1.300" height="1.300" rx=".2"/><rect x="4.85" y="5" width="1.300" height="1.300" rx=".2"/><rect x="7.7" y="5" width="1.300" height="1.300" rx=".2"/><rect x="2" y="7.8" width="1.300" height="1.300" rx=".2"/><rect x="4.85" y="7.8" width="1.300" height="1.300" rx=".2"/><rect x="7.7" y="7.8" width="1.300" height="1.300" rx=".2"/></g></svg><span class="agt" id="ag1" style="left:1313px;top:608px">Huilerie</span>
<div class="bv" style="top:600px"></div><div class="be" style="top:600px"></div><svg class="ico" style="left:1447px;top:608px" width="19" height="14" viewBox="0 0 19 14"><path d="M9.500 0C5.300 0 1.800 2.700.2 6.400c-.2.400-.2.800 0 1.200C1.800 11.300 5.300 14 9.500 14s7.700-2.700 9.300-6.400c.2-.4.200-.8 0-1.200C17.200 2.700 13.700 0 9.500 0z" fill="#6ac9cd"/><circle cx="9.500" cy="7" r="4.700" fill="#fff"/><path d="M9.500 3.800a3.200 3.200 0 1 1-3.200 3.400c.4.200.700.300 1.100.300a2.100 2.100 0 0 0 1.800-3.200c.1-.3.200-.4.300-.5z" fill="#6ac9cd"/></svg><svg class="ico" style="left:1492px;top:607px" width="17" height="16" viewBox="0 0 17 16"><path d="M7 2.800H3.200C1.900 2.800.9 3.800.9 5.100v7.700c0 1.300 1 2.300 2.300 2.300h7.700c1.300 0 2.300-1 2.300-2.300V9.600" fill="none" stroke="#6b7897" stroke-width="1.800" stroke-linecap="round"/><path d="M12.300 1.600l2.300 2.300-6.300 6.300-3.100.8.800-3.100z" fill="#6b7897"/><path d="M13.300.6c.5-.5 1.300-.5 1.800 0l.5.500c.5.500.5 1.300 0 1.800l-.5.500-2.300-2.300z" fill="#6b7897"/></svg>
<div class="row" style="top:648px"></div>
<div class="av" style="top:663px"><svg width="36" height="36" viewBox="0 0 36 36"><defs><radialGradient id="fg2" cx=".55" cy=".5" r=".6"><stop offset="0" stop-color="#71503d"/><stop offset=".6" stop-color="#4b3226"/><stop offset="1" stop-color="#2a1c16"/></radialGradient></defs><rect width="36" height="36" fill="#c2c5c3"/><rect x="0" y="0" width="6.300" height="36" fill="#cfc5b8"/><rect x="6.200" y="0" width=".8" height="36" fill="#7a756e"/><path d="M2 36L4.500 28 11 22.500 17.500 19 22 23h6l3-3 5-2v18z" fill="#8f857b"/><g stroke="#4b443d" stroke-width="1.100" opacity=".75"><path d="M6 30l4 6M10 25l6 11M15 21.500l7 14.500M22 24l5 12M28 23l4 13M33 19l3 8"/><path d="M3 32l14-9M6 36l16-10M14 36l14-9M22 36l14-9M30 36l6-4"/></g><g stroke="#d6cec4" stroke-width=".8" opacity=".7"><path d="M8 27.500l5 8.500M13 23l6 13M25 24l4 12M31 21l4 11"/><path d="M4 34.500l15-10M18 36l14-9M26 36l10-6.500"/></g><rect x="20.500" y="19" width="7" height="5.500" fill="#3d281e"/><ellipse cx="23.800" cy="14" rx="7" ry="9" fill="url(#fg2)"/><path d="M16.300 13c-.6-7 2.500-12.500 7.500-12.500 5.500 0 8.500 5 7.600 12.500-.8-4-2.600-6-7.600-6-4.600 0-6.600 2-7.500 6z" fill="#16110f"/><path d="M19.800 12.700h2.800M25.300 12.700h2.800" stroke="#22160f" stroke-width="1.100" opacity=".8"/><path d="M22 20.800q2 .8 4 0" stroke="#2a1a14" stroke-width=".9" fill="none" opacity=".8"/></svg></div>
<span class="acc" id="acc2" style="top:664px;letter-spacing:0.72px">EAV0-0200-0000-0018-7-CDF</span>
<svg class="ico" style="left:333px;top:684px" width="7" height="6" viewBox="0 0 7 6"><path d="M0 .6C0 .3.300 0 .6 0h2.500c.2 0 .4.100.5.200l3 2.400c.4.300.4.800 0 1.100L4.600 5.600c-.4.300-.9.300-1.300 0L.3 3.200C.1 3.100 0 2.900 0 2.700z" fill="#5a6070"/></svg><span class="sub" id="sub2" style="letter-spacing:.52px;top:680px">mutombo malu patrick</span>
<span class="nm" id="nm2" style="top:666px">Mutombo Malu Patrick</span>
<svg class="ico" style="left:747px;top:683px" width="8" height="8" viewBox="0 0 8 8"><circle cx="4" cy="2" r="2" fill="#555"/><path d="M0 8c0-2 1.300-3.300 3-3.300h2c1.700 0 3 1.300 3 3.300z" fill="#555"/></svg><span class="role" id="role2" style="left:762px;top:680px">Membre</span>
<div class="tb" style="left:975px;top:670px;width:96px"></div><svg class="ico" style="left:981px;top:675px" width="12" height="12" viewBox="0 0 16 16"><path d="M8 .6l7 3.200c.5.200.5.900 0 1.100L8 8.100 1 4.900c-.5-.2-.5-.9 0-1.100z" fill="#222"/><path d="M1 7.400l1.900-.9L8 8.900l5.100-2.400 1.900.9c.5.200.5.900 0 1.100l-7 3.200-7-3.200c-.5-.2-.5-.9 0-1.100z" fill="#222"/><path d="M1 11l1.900-.9L8 12.500l5.100-2.400 1.900.9c.5.200.5.900 0 1.100l-7 3.200-7-3.200c-.5-.2-.5-.9 0-1.100z" fill="#222"/></svg><span class="tbt" id="tb2" style="letter-spacing:-.32px;left:999px;top:674px">Epargne à vue</span>
<div class="sb" style="left:1154px;top:671px;width:50px"></div>
<svg class="ico" style="left:1159px;top:675px" width="12" height="12" viewBox="0 0 12 12"><circle cx="6" cy="6" r="5.700" fill="#fff"/><path d="M3.300 6.200l1.900 1.900 3.600-3.700" fill="none" stroke="#14b65b" stroke-width="1.500" stroke-linecap="round" stroke-linejoin="round"/></svg><span class="sbt" id="sb2" style="letter-spacing:0;left:1175px;top:674px">Actif</span>
<svg class="ico" style="left:1300px;top:676px" width="6" height="8" viewBox="0 0 11 14"><path d="M1.300 0h8.400c.7 0 1.300.6 1.300 1.300v12.700H7v-2.500c0-.5-.4-.9-.9-.9H4.900c-.5 0-.9.4-.9.900V14H0V1.300C0 .6.600 0 1.300 0z" fill="#444"/><g fill="#fff"><rect x="2" y="2.2" width="1.300" height="1.300" rx=".2"/><rect x="4.85" y="2.2" width="1.300" height="1.300" rx=".2"/><rect x="7.7" y="2.2" width="1.300" height="1.300" rx=".2"/><rect x="2" y="5" width="1.300" height="1.300" rx=".2"/><rect x="4.85" y="5" width="1.300" height="1.300" rx=".2"/><rect x="7.7" y="5" width="1.300" height="1.300" rx=".2"/><rect x="2" y="7.8" width="1.300" height="1.300" rx=".2"/><rect x="4.85" y="7.8" width="1.300" height="1.300" rx=".2"/><rect x="7.7" y="7.8" width="1.300" height="1.300" rx=".2"/></g></svg><span class="agt" id="ag2" style="left:1313px;top:673px">Huilerie</span>
<div class="bv" style="top:665px"></div><div class="be" style="top:665px"></div><svg class="ico" style="left:1447px;top:673px" width="19" height="14" viewBox="0 0 19 14"><path d="M9.500 0C5.300 0 1.800 2.700.2 6.400c-.2.400-.2.800 0 1.200C1.800 11.300 5.300 14 9.500 14s7.700-2.700 9.300-6.400c.2-.4.200-.8 0-1.200C17.200 2.700 13.700 0 9.500 0z" fill="#6ac9cd"/><circle cx="9.500" cy="7" r="4.700" fill="#fff"/><path d="M9.500 3.800a3.200 3.200 0 1 1-3.200 3.400c.4.200.700.300 1.100.300a2.100 2.100 0 0 0 1.800-3.200c.1-.3.200-.4.300-.5z" fill="#6ac9cd"/></svg><svg class="ico" style="left:1492px;top:672px" width="17" height="16" viewBox="0 0 17 16"><path d="M7 2.800H3.200C1.900 2.800.9 3.800.9 5.100v7.700c0 1.300 1 2.300 2.300 2.300h7.700c1.300 0 2.300-1 2.300-2.300V9.600" fill="none" stroke="#6b7897" stroke-width="1.800" stroke-linecap="round"/><path d="M12.300 1.600l2.300 2.300-6.300 6.300-3.100.8.800-3.100z" fill="#6b7897"/><path d="M13.300.6c.5-.5 1.300-.5 1.800 0l.5.500c.5.500.5 1.300 0 1.800l-.5.500-2.300-2.300z" fill="#6b7897"/></svg>
<div class="row" style="top:713px"></div>
<div class="av" style="top:728px"><div style="width:36px;height:36px;background:#6a768f"><svg style="position:absolute;left:9px;top:8px" width="18" height="18" viewBox="0 0 18 18"><rect width="18" height="18" fill="#b3b9c9"/><rect x="2.200" y="2.200" width="13.600" height="13.600" fill="#6a768f"/><path d="M3 15V7.200l2.600 2.800 2-1.600 2.400 2.400L15 3.800V15z" fill="#b3b9c9"/><circle cx="6.600" cy="5.200" r="1.700" fill="#b3b9c9"/></svg></div></div>
<span class="acc" id="acc3" style="top:729px;letter-spacing:0.75px">EMP0-0100-0000-0047-3-USD</span>
<svg class="ico" style="left:333px;top:749px" width="7" height="6" viewBox="0 0 7 6"><path d="M0 .6C0 .3.300 0 .6 0h2.500c.2 0 .4.100.5.200l3 2.400c.4.300.4.800 0 1.100L4.600 5.600c-.4.300-.9.300-1.300 0L.3 3.200C.1 3.100 0 2.900 0 2.700z" fill="#5a6070"/></svg><span class="sub" id="sub3" style="top:745px">KISALA</span>
<span class="nm" id="nm3" style="letter-spacing:.1px;top:731px">Kisala Mayuma Andrea</span>
<svg class="ico" style="left:753px;top:748px" width="8" height="8" viewBox="0 0 8 8"><circle cx="4" cy="2" r="2" fill="#555"/><path d="M0 8c0-2 1.300-3.300 3-3.300h2c1.700 0 3 1.300 3 3.300z" fill="#555"/></svg><span class="role" id="role3" style="left:767px;top:745px">Agent</span>
<div class="tb" style="left:966px;top:735px;width:114px"></div><svg class="ico" style="left:972px;top:740px" width="12" height="12" viewBox="0 0 16 16"><path d="M8 .6l7 3.200c.5.200.5.900 0 1.100L8 8.100 1 4.900c-.5-.2-.5-.9 0-1.100z" fill="#222"/><path d="M1 7.400l1.900-.9L8 8.900l5.100-2.400 1.900.9c.5.200.5.900 0 1.100l-7 3.200-7-3.200c-.5-.2-.5-.9 0-1.100z" fill="#222"/><path d="M1 11l1.900-.9L8 12.500l5.100-2.400 1.900.9c.5.200.5.900 0 1.100l-7 3.200-7-3.200c-.5-.2-.5-.9 0-1.100z" fill="#222"/></svg><span class="tbt" id="tb3" style="left:990px;top:739px">Compte employés</span>
<div class="sb" style="left:1139px;top:736px;width:81px"></div>
<svg class="ico" style="left:1144px;top:741px" width="14" height="10" viewBox="0 0 14 10"><g fill="none" stroke="#ecfff3" stroke-width="1.600"><ellipse cx="0" cy="0" rx="3.900" ry="2.400" transform="translate(4.400 6.300) rotate(-40)"/><ellipse cx="0" cy="0" rx="3.900" ry="2.400" transform="translate(9.300 3.900) rotate(-40)"/></g></svg><span class="sbt" id="sb3" style="left:1163.5px;top:739px">Compte lié</span>
<svg class="ico" style="left:1275px;top:741px" width="6" height="8" viewBox="0 0 11 14"><path d="M1.300 0h8.400c.7 0 1.300.6 1.300 1.300v12.700H7v-2.500c0-.5-.4-.9-.9-.9H4.900c-.5 0-.9.4-.9.900V14H0V1.300C0 .6.600 0 1.300 0z" fill="#444"/><g fill="#fff"><rect x="2" y="2.2" width="1.300" height="1.300" rx=".2"/><rect x="4.85" y="2.2" width="1.300" height="1.300" rx=".2"/><rect x="7.7" y="2.2" width="1.300" height="1.300" rx=".2"/><rect x="2" y="5" width="1.300" height="1.300" rx=".2"/><rect x="4.85" y="5" width="1.300" height="1.300" rx=".2"/><rect x="7.7" y="5" width="1.300" height="1.300" rx=".2"/><rect x="2" y="7.8" width="1.300" height="1.300" rx=".2"/><rect x="4.85" y="7.8" width="1.300" height="1.300" rx=".2"/><rect x="7.7" y="7.8" width="1.300" height="1.300" rx=".2"/></g></svg><span class="agt" id="ag3" style="letter-spacing:-.22px;left:1288px;top:738px">Agence de Pascal</span>
<div class="bv" style="top:730px"></div><div class="be" style="top:730px"></div><svg class="ico" style="left:1447px;top:738px" width="19" height="14" viewBox="0 0 19 14"><path d="M9.500 0C5.300 0 1.800 2.700.2 6.400c-.2.400-.2.800 0 1.200C1.800 11.300 5.300 14 9.500 14s7.700-2.700 9.300-6.400c.2-.4.200-.8 0-1.200C17.200 2.700 13.700 0 9.500 0z" fill="#6ac9cd"/><circle cx="9.500" cy="7" r="4.700" fill="#fff"/><path d="M9.500 3.800a3.200 3.200 0 1 1-3.200 3.400c.4.200.700.300 1.100.300a2.100 2.100 0 0 0 1.800-3.200c.1-.3.200-.4.300-.5z" fill="#6ac9cd"/></svg><svg class="ico" style="left:1492px;top:737px" width="17" height="16" viewBox="0 0 17 16"><path d="M7 2.800H3.200C1.900 2.800.9 3.800.9 5.100v7.700c0 1.300 1 2.300 2.300 2.300h7.700c1.300 0 2.300-1 2.300-2.300V9.600" fill="none" stroke="#6b7897" stroke-width="1.800" stroke-linecap="round"/><path d="M12.300 1.600l2.300 2.300-6.300 6.300-3.100.8.800-3.100z" fill="#6b7897"/><path d="M13.300.6c.5-.5 1.300-.5 1.800 0l.5.500c.5.500.5 1.300 0 1.800l-.5.500-2.300-2.300z" fill="#6b7897"/></svg>
<span class="abs" id="wm1" style="left:1218px;top:686px;font-size:19.900px;line-height:26px;color:rgba(120,120,120,.62)">Activer Windows</span>
<span class="abs" id="wm2" style="left:1218px;top:712px;font-size:14.800px;line-height:18px;color:rgba(120,120,120,.62)">Accédez aux paramètres pour activer Windows.</span>
</div>
<div id="scroll"><div class="thumb"></div><svg class="ico" style="left:3px;top:5px" width="9" height="7" viewBox="0 0 9 7"><path d="M4.500 0.300L9 6.500H0z" fill="#8c8c8c"/></svg><svg class="ico" style="left:3px;top:755px" width="9" height="7" viewBox="0 0 9 7"><path d="M4.500 6.700L9 .5H0z" fill="#8c8c8c"/></svg></div>
</body>
</html>
